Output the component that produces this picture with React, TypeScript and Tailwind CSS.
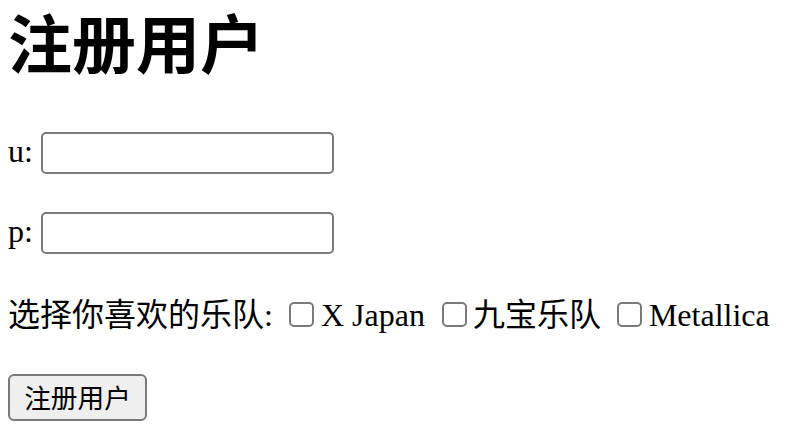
import React from "react";

const serif = "font-['Liberation_Serif','Noto_Sans_CJK_SC',serif]";

function Box() {
  return (
    <span className="mt-[6px] block h-[25px] w-[25px] shrink-0 rounded-[5px] border-2 border-[#7a7a7a] bg-white" />
  );
}

export default function App() {
  return (
    <div className={`min-h-screen bg-white pl-2 text-black ${serif}`}>
      <h1 className="pt-[15px] text-[64px] leading-[64px] font-bold">注册用户</h1>

      <div className="mt-[53px] flex items-start">
        <span className="text-[32px] leading-[38px]">u:</span>
        <input
          type="text"
          className="ml-2 h-[42px] w-[293px] rounded-[5px] border-2 border-[#7a7a7a] bg-white outline-none"
        />
      </div>

      <div className="mt-[38px] flex items-start">
        <span className="text-[32px] leading-[38px]">p:</span>
        <input
          type="password"
          className="ml-2 h-[42px] w-[293px] rounded-[5px] border-2 border-[#7a7a7a] bg-white outline-none"
        />
      </div>

      <div className="mt-[42px] flex items-start text-[32px] leading-[38px]">
        <span className="whitespace-nowrap">选择你喜欢的乐队:</span>
        <span className="ml-[16px]">
          <Box />
        </span>
        <span className="ml-[7px] whitespace-nowrap">X Japan</span>
        <span className="ml-[17px]">
          <Box />
        </span>
        <span className="ml-[6px] whitespace-nowrap">九宝乐队</span>
        <span className="ml-[16px]">
          <Box />
        </span>
        <span className="ml-[7px] whitespace-nowrap">Metallica</span>
      </div>

      <div className="mt-[40px] flex">
        <button className="flex h-[47px] w-[139px] items-center justify-center rounded-[6px] border-2 border-[#7a7a7a] bg-[#efefef] font-['Noto_Sans_CJK_SC',sans-serif] text-[26.67px] leading-none text-black">
          注册用户
        </button>
      </div>
    </div>
  );
}
